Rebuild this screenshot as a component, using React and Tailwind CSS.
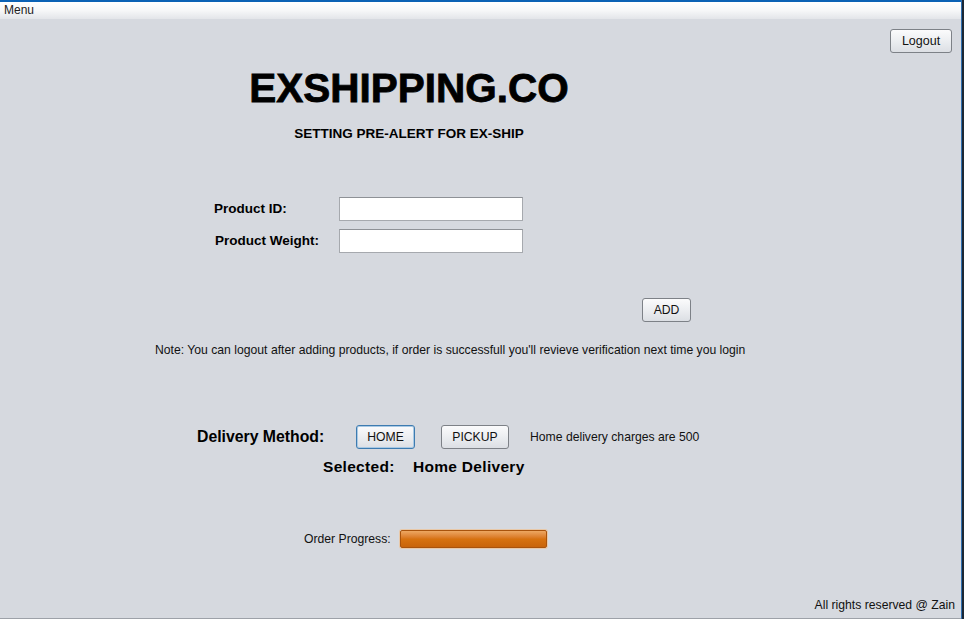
import React from 'react';

const font = { fontFamily: '"Liberation Sans", Arial, sans-serif' };

const SwingButton = ({ children, className = '', focused = false }) => (
    <button
        className={`h-[24px] rounded-[3px] border text-[12.2px] leading-none text-[#111] bg-gradient-to-b from-[#fbfbfc] via-[#eceef1] to-[#dcdfe4] ${focused ? 'border-[#3d7bb0] shadow-[inset_0_0_0_1px_#a9c9e4]' : 'border-[#7d8187]'} ${className}`}
    >
        {children}
    </button>
);

const TextField = () => (
    <div className="w-[184px] h-[24px] bg-white border border-[#a6a9ae] border-t-[#8e9196]" />
);

export default function App() {
    return (
        <div className="w-[964px] h-[619px] flex bg-white overflow-hidden" style={font}>
            <div className="w-[961px] h-full flex flex-col">
                {/* title strip + menu */}
                <div className="h-[2px] bg-[#0b62b5] shrink-0" />
                <div className="h-[17px] shrink-0 bg-gradient-to-b from-white via-[#f6f7f8] to-[#e3e5e9] px-[4px] text-[12px] leading-[17px] text-[#222]">
                    Menu
                </div>

                <div className="flex-1 bg-[#d6d9df] flex flex-col text-black border-b border-[#9da1a8]">
                    <div className="mt-[10px] flex justify-end pr-[9px]">
                        <SwingButton className="w-[62px] text-[12.5px]">Logout</SwingButton>
                    </div>

                    <div className="ml-[250px] w-[318px] flex flex-col items-center">
                        <h1 className="mt-[15px] h-[40px] text-[40.5px] leading-[40px] font-bold [-webkit-text-stroke:0.8px_black] whitespace-nowrap">
                            EXSHIPPING.CO
                        </h1>
                        <h2 className="mt-[18px] h-[16px] text-[13.5px] leading-[16px] font-bold">
                            SETTING PRE-ALERT FOR EX-SHIP
                        </h2>
                    </div>

                    <div className="mt-[55px] ml-[214px] grid grid-cols-[125px_184px] gap-y-[8px] items-center text-[13.5px] font-bold">
                        <span>Product ID:</span>
                        <TextField />
                        <span className="pl-[1px]">Product Weight:</span>
                        <TextField />
                    </div>

                    <div className="mt-[44px] ml-[642px]">
                        <SwingButton className="w-[49px]">ADD</SwingButton>
                    </div>

                    <p className="mt-[21px] ml-[155px] h-[14px] text-[12.2px] leading-[14px] text-[#111] whitespace-nowrap">
                        Note: You can logout after adding products, if order is successfull you'll revieve verification next time you login
                    </p>

                    <div className="mt-[68px] ml-[197px] flex items-center">
                        <span className="w-[159px] text-[15.8px] font-bold">Delivery Method:</span>
                        <SwingButton focused className="w-[59px]">HOME</SwingButton>
                        <SwingButton className="ml-[26px] w-[68px]">PICKUP</SwingButton>
                        <span className="ml-[21px] text-[12.2px] text-[#111]">Home delivery charges are 500</span>
                    </div>

                    <div className="mt-[9px] ml-[323px] h-[18px] flex items-center text-[15.5px] leading-[18px] font-bold tracking-[0.3px]">
                        <span className="w-[90px]">Selected:</span>
                        <span>Home Delivery</span>
                    </div>

                    <div className="mt-[54px] ml-[304px] flex items-center">
                        <span className="text-[12.2px] text-[#111]">Order Progress:</span>
                        <div className="ml-[9px] w-[147px] h-[18px] rounded-[2px] border border-[#a9530c] shadow-[0_0_0_1px_#e8c8a8] bg-gradient-to-b from-[#eda761] via-[#d7720f] to-[#c8640a]" />
                    </div>

                    <div className="mt-[50px] flex justify-end pr-[6px]">
                        <span className="text-[12.2px] leading-[14px] text-[#111]">All rights reserved @ Zain</span>
                    </div>
                </div>
            </div>
            <div className="w-[1px] h-full bg-[#2f6fb0]" />
            <div className="w-[2px] h-full bg-[#1c2835]" />
        </div>
    );
}
